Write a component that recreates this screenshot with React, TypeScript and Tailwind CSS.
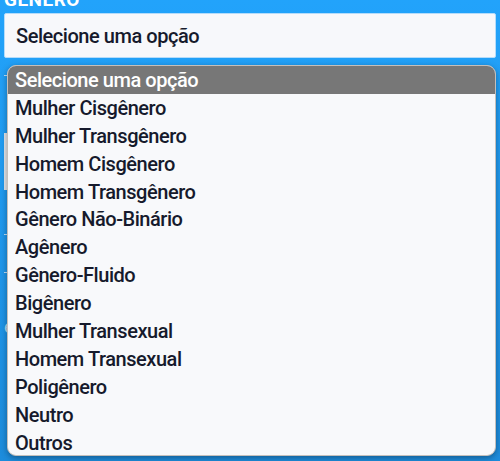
import React from 'react';

const options = [
  'Selecione uma opção',
  'Mulher Cisgênero',
  'Mulher Transgênero',
  'Homem Cisgênero',
  'Homem Transgênero',
  'Gênero Não-Binário',
  'Agênero',
  'Gênero-Fluido',
  'Bigênero',
  'Mulher Transexual',
  'Homem Transexual',
  'Poligênero',
  'Neutro',
  'Outros',
];

const App: React.FC = () => {
  return (
    <div className="relative w-[500px] h-[461px] overflow-hidden bg-gradient-to-b from-[#22a3fb] to-[#1d8cdc] font-['Roboto',sans-serif]">
      {/* form behind the open list */}
      <div className="flex flex-col px-1 -mt-[11px]">
        <label className="text-white font-bold text-[19px] leading-[22px] tracking-wide">GÊNERO</label>
        <div className="mt-[2px] h-[45px] flex items-center px-[11px] bg-[#f7f8fb] border border-[#b5dcfa] rounded-[2px]">
          <span className="text-[#161a2c] text-[20px] font-medium tracking-[-0.45px]">Selecione uma opção</span>
        </div>
        <div className="mt-[17px] h-px bg-white/70" />
        <div className="mt-[57px] h-[57px] bg-[#e3e6ea]" />
        <div className="mt-[44px] h-px bg-white/70" />
        <div className="mt-[37px] h-px bg-white/70" />
        <div className="mt-[40px] text-white/70 text-[18px]">e</div>
      </div>

      {/* open option list */}
      <div className="absolute left-[7px] top-[65px] w-[489px] h-[391px] rounded-[9px] bg-[#f8f9fb] border border-[#c4bfbb] shadow-[0_2px_6px_rgba(0,0,0,0.35)] overflow-hidden">
        <ul className="flex flex-col">
          {options.map((o, i) => (
            <li
              key={o}
              className={`h-[27.9px] flex items-center px-[7px] text-[20px] font-medium tracking-[-0.45px] ${i === 0 ? 'bg-[#777777] text-white' : 'text-[#161a2c]'}`}
            >
              {o}
            </li>
          ))}
        </ul>
      </div>
    </div>
  );
};

export default App;
